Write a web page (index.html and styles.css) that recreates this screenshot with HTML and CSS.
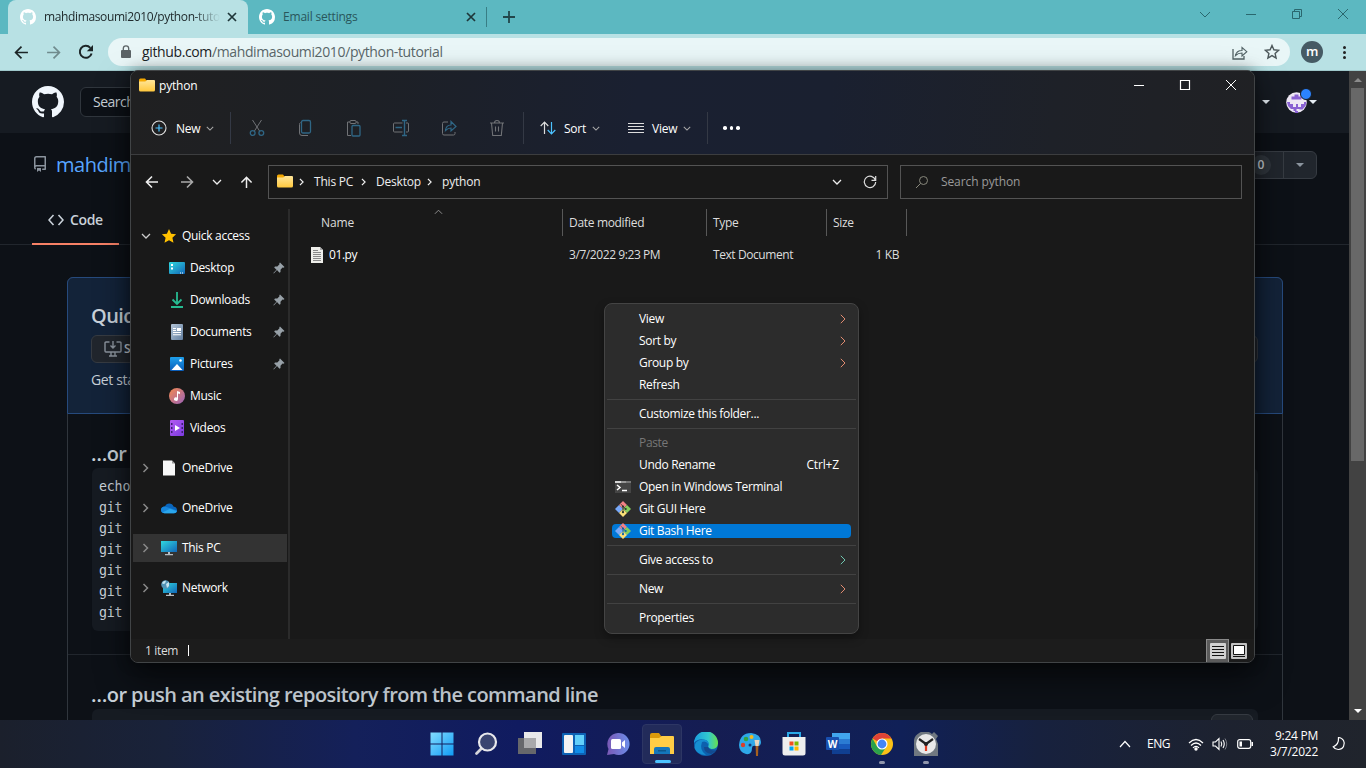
FILE: index.html
```html
<!DOCTYPE html>
<html lang="en">
<head>
<meta charset="utf-8">
<title>Desktop</title>
<link rel="stylesheet" href="styles.css">
</head>
<body>
<svg width="0" height="0" class="defs">
  <defs>
    <symbol id="octocat" viewBox="0 0 16 16"><path fill-rule="evenodd" d="M8 0C3.58 0 0 3.58 0 8c0 3.54 2.29 6.53 5.47 7.59.4.07.55-.17.55-.38 0-.19-.01-.82-.01-1.49-2.01.37-2.53-.49-2.69-.94-.09-.23-.48-.94-.82-1.13-.28-.15-.68-.52-.01-.53.63-.01 1.08.58 1.23.82.72 1.21 1.87.87 2.33.66.07-.52.28-.87.51-1.07-1.78-.2-3.64-.89-3.64-3.95 0-.87.31-1.59.82-2.15-.08-.2-.36-1.02.08-2.12 0 0 .67-.21 2.2.82.64-.18 1.32-.27 2-.27s1.36.09 2 .27c1.53-1.04 2.2-.82 2.2-.82.44 1.1.16 1.92.08 2.12.51.56.82 1.27.82 2.15 0 3.07-1.87 3.75-3.65 3.95.29.25.54.73.54 1.48 0 1.07-.01 1.93-.01 2.2 0 .21.15.46.55.38A8.01 8.01 0 0 0 16 8c0-4.42-3.58-8-8-8z"/></symbol>
    <symbol id="x" viewBox="0 0 10 10"><path d="M1 1l8 8M9 1l-8 8" fill="none" stroke="currentColor" stroke-width="1.7"/></symbol>
    <symbol id="thinx" viewBox="0 0 12 12"><path d="M1 1l10 10M11 1L1 11" fill="none" stroke="currentColor"/></symbol>
    <symbol id="down" viewBox="0 0 10 6"><path d="M1 1l4 4 4-4" fill="none" stroke="currentColor" stroke-width="1.3"/></symbol>
    <symbol id="right" viewBox="0 0 6 10"><path d="M1 1l4 4-4 4" fill="none" stroke="currentColor" stroke-width="1.5"/></symbol>
    <symbol id="thinright" viewBox="0 0 6 10"><path d="M.8.8L5 5 .8 9.200" fill="none" stroke="currentColor"/></symbol>
    <symbol id="arrow" viewBox="0 0 14 14"><path d="M13 7H1.5M7 1.5L1.5 7 7 12.500" fill="none" stroke="currentColor" stroke-width="1.6"/></symbol>
    <symbol id="folder" viewBox="0 0 16 14"><path d="M0 2Q0 .5 1.500.5H6L7.500 2.500H14V7H0z" fill="#f5a800"/><path d="M0 3.500H6.300L8 2H15Q16 2 16 3V12Q16 13.500 14.500 13.500H1.500Q0 13.500 0 12z" fill="url(#gf)"/></symbol>
    <symbol id="pin" viewBox="0 0 12 12"><path d="M7 .5L11.500 5 10.500 5.700 9.500 5.500 7.500 7.800V10L6.500 10.700 4 8 .8 11.500.4 11 3.500 7.700 1.200 5.400 2 4.400H4.300L6.500 2.300 6.300 1.300z" fill="#98a1a8"/></symbol>
    <symbol id="git" viewBox="0 0 16 16"><path d="M8 0l4 4-4 4-4-4z" fill="#f28186"/><path d="M4 4l4 4-4 4-4-4z" fill="#78a9fa"/><path d="M12 4l4 4-4 4-4-4z" fill="#85cd5c"/><path d="M8 8l4 4-4 4-4-4z" fill="#fbe078"/><path d="M6 3.200L10.500 8M8 5.500V11" fill="none" stroke="currentColor" stroke-width=".9"/><g fill="currentColor"><circle cx="8" cy="5.500" r="1.100"/><circle cx="10.700" cy="8" r="1.100"/><circle cx="8" cy="11.200" r="1.100"/></g></symbol>
    <symbol id="monitor" viewBox="0 0 16 15"><path d="M0 .5h16v11H0z" fill="url(#gm)"/><path d="M7 11.500h2V14H7zM4 13.500h8v1.200H4z" fill="#b5bcc2"/></symbol>
    <linearGradient id="gf" x2="0" y2="1"><stop stop-color="#ffe69a"/><stop offset="1" stop-color="#ffc83d"/></linearGradient>
    <linearGradient id="gm" x2="1" y2="1"><stop stop-color="#30d8de"/><stop offset="1" stop-color="#1266b8"/></linearGradient>
    <linearGradient id="gw" x2="1" y2="1"><stop stop-color="#83dcff"/><stop offset="1" stop-color="#109cf5"/></linearGradient>
    <linearGradient id="gmu" x2="1" y2="1"><stop stop-color="#f58a4e"/><stop offset="1" stop-color="#9a62ba"/></linearGradient>
    <linearGradient id="gv" x2="1" y2="1"><stop stop-color="#b45af2"/><stop offset="1" stop-color="#7b3be0"/></linearGradient>
    <linearGradient id="gp" x2="0" y2="1"><stop stop-color="#1ea0ec"/><stop offset="1" stop-color="#0a5cb8"/></linearGradient>
    <linearGradient id="gdoc" x2="1" y2="1"><stop stop-color="#b4c5d8"/><stop offset="1" stop-color="#637f9f"/></linearGradient>
    <linearGradient id="gc" x2="1" y2="0"><stop stop-color="#7a58b5"/><stop offset="1" stop-color="#6c8eea"/></linearGradient>
    <linearGradient id="ge" x2="1" y2="0"><stop stop-color="#199ce0"/><stop offset=".6" stop-color="#32c8ce"/><stop offset="1" stop-color="#68e04d"/></linearGradient>
  </defs>
</svg>
<div class="desktop">
  <div class="browser">
    <div class="tabs">
      <div class="tab active"><svg class="i16 white"><use href="#octocat"/></svg><span class="tabname fade">mahdimasoumi2010/python-tuto</span><svg class="close"><use href="#x"/></svg></div>
      <div class="tab"><svg class="i16 white"><use href="#octocat"/></svg><span class="tabname">Email settings</span><svg class="close"><use href="#x"/></svg></div>
      <i class="tabsep"></i>
      <svg class="plus" viewBox="0 0 12 12"><path d="M6 0v12M0 6h12" stroke="currentColor" stroke-width="1.800"/></svg>
      <div class="winbtns">
        <svg width="12" height="7" viewBox="0 0 12 7"><path d="M1 1l5 5 5-5" fill="none" stroke="currentColor"/></svg>
        <svg width="12" height="12" viewBox="0 0 12 12"><path d="M1 6.500h10" stroke="currentColor"/></svg>
        <svg width="12" height="12" viewBox="0 0 12 12"><path d="M1.500 3.500h7v7h-7zM3.500 3.500v-2h7v7h-2" fill="none" stroke="currentColor"/></svg>
        <svg width="12" height="12"><use href="#thinx"/></svg>
      </div>
    </div>
    <div class="toolbar">
      <svg class="nav" viewBox="0 0 14 14"><use href="#arrow"/></svg>
      <svg class="nav flip dim" viewBox="0 0 14 14"><use href="#arrow"/></svg>
      <svg class="reload" viewBox="0 0 16 16"><path d="M13.600 9.500A6 6 0 1 1 12.300 3.800" fill="none" stroke="currentColor" stroke-width="2"/><path d="M15 1v6.200H8.800z" fill="currentColor"/></svg>
      <div class="omnibox">
        <svg width="10" height="14" viewBox="0 0 10 14"><path d="M1 5h8q1 0 1 1v6q0 1-1 1H1q-1 0-1-1V6q0-1 1-1z" fill="#5b6366"/><path d="M2.300 6V3.500a2.700 2.700 0 0 1 5.400 0V6" fill="none" stroke="#5b6366" stroke-width="1.300"/></svg>
        <span class="url"><b>github.com</b>/mahdimasoumi2010/python-tutorial</span>
        <svg class="share" width="16" height="15" viewBox="0 0 16 15"><path d="M1 4v10h11v-3" fill="none" stroke="#536366" stroke-width="1.300"/><path d="M3.500 10.500Q4.500 5.500 10 5.500V2.500L14.800 6.700 10 11V8Q6 8 3.500 10.500z" fill="none" stroke="#536366" stroke-width="1.100"/></svg>
        <svg class="star" width="16" height="16" viewBox="0 0 16 16"><path d="M8 1.500l1.900 4.300 4.700.5-3.500 3.100 1 4.600L8 11.600 3.900 14l1-4.600L1.400 6.300l4.700-.5z" fill="none" stroke="#4d585b" stroke-width="1.400"/></svg>
      </div>
      <span class="me">m</span>
      <span class="dots3"><i></i><i></i><i></i></span>
    </div>
    <div class="viewport">
      <div class="github">
        <header>
          <svg class="ghlogo"><use href="#octocat"/></svg>
          <div class="ghsearch">Search</div>
          <div class="ghuser">
            <i class="tri"></i>
            <span class="avatar"><svg width="21" height="21" viewBox="0 0 21 21"><circle cx="10.500" cy="10.500" r="10.300" fill="#eee8f5"/><path d="M5.500 4.500h3v-2h4v2h3v3h-10zM1 10h3v2h3v3h3v-3h2v3h3v-3h3v-2h2.500l-1 4-3 3.500h-3V17h-3v2h-3v-2H5l-3-3zM9 19h3v2H9z" fill="#8a62d3"/></svg><em></em></span>
            <i class="tri"></i>
          </div>
        </header>
        <div class="repo">
          <svg class="repoicon" viewBox="0 0 16 16"><path fill="#8b949e" fill-rule="evenodd" d="M2 2.500A2.500 2.500 0 0 1 4.500 0h8.750a.75.75 0 0 1 .75.75v12.500a.75.75 0 0 1-.75.75h-2.500a.75.75 0 1 1 0-1.500h1.750v-2h-8a1 1 0 0 0-.714 1.700.75.75 0 0 1-1.072 1.050A2.500 2.500 0 0 1 2 11.500v-9zm10.500-1V9h-8c-.356 0-.694.074-1 .208V2.500a1 1 0 0 1 1-1h8zM5 12.250v3.250a.25.25 0 0 0 .4.200l1.450-1.087a.25.25 0 0 1 .3 0L8.600 15.700a.25.25 0 0 0 .4-.2v-3.250a.25.25 0 0 0-.25-.25h-3.500a.25.25 0 0 0-.25.250z"/></svg>
          <span class="owner">mahdima</span>
          <div class="fork"><span>0</span><b><i class="tri"></i></b></div>
        </div>
        <nav class="ghtabs"><div class="codetab"><svg width="16" height="12" viewBox="0 0 16 12"><path d="M5.500 1L1 6l4.500 5M10.500 1L15 6l-4.500 5" fill="none" stroke="#c9d1d9" stroke-width="1.600"/></svg>Code</div></nav>
        <div class="box">
          <section class="setup">
            <h3>Quick</h3>
            <div class="desk"><svg width="18" height="16" viewBox="0 0 18 16"><path d="M5.500 1H2Q1 1 1 2v8q0 1 1 1h14q1 0 1-1V2q0-1-1-1h-3.500M9 0v6.500M6.500 4.500L9 7l2.500-2.500M7 11v4m4-4v4M5 15h8" fill="none" stroke="#8b949e" stroke-width="1.400"/></svg>S</div>
            <p>Get sta</p>
          </section>
          <section class="create">
            <h3>…or</h3>
            <pre>echo
git
git
git
git
git
git</pre>
          </section>
          <section class="push">
            <h3>…or push an existing repository from the command line</h3>
            <div class="pushcode"><i></i></div>
          </section>
        </div>
      </div>
      <div class="scroll"><i class="up"></i><div></div><i class="dn"></i></div>
    </div>
  </div>

  <div class="explorer">
    <div class="chrome">
      <div class="title"><svg class="f16"><use href="#folder"/></svg><span>python</span>
        <div class="exbtns"><svg width="12" height="12" viewBox="0 0 12 12"><path d="M1 6.500h10" stroke="#fff"/></svg><svg width="12" height="12" viewBox="0 0 12 12"><path d="M1.500 1.500h9v9h-9z" fill="none" stroke="#fff" stroke-width="1.200"/></svg><svg width="12" height="12"><use href="#thinx"/></svg></div>
      </div>
      <div class="cmds">
        <div class="cmd new"><svg width="16" height="16" viewBox="0 0 16 16"><circle cx="8" cy="8" r="7" fill="none" stroke="#ddd" stroke-width="1.100"/><path d="M8 4.500v7M4.500 8h7" stroke="#4cc2ff" stroke-width="1.200"/></svg><span>New</span><svg class="cv"><use href="#down"/></svg></div>
        <div class="cmd icons">
          <svg viewBox="0 0 16 18"><path d="M3.500 1l7.200 11.200M12.500 1L5.300 12.200" stroke="#707276" fill="none"/><g fill="none" stroke="#2f6685" stroke-width="1.300"><circle cx="3.700" cy="14" r="2.400"/><circle cx="12.300" cy="14" r="2.400"/></g></svg>
          <svg viewBox="0 0 16 18"><path d="M3.500 3.500Q2.500 4 2.500 5.500V14Q2.500 16.500 5 16.500h6" stroke="#707276" fill="none"/><rect x="4.500" y="1.500" width="9" height="12.500" rx="1.500" stroke="#2f6685" stroke-width="1.300" fill="none"/></svg>
          <svg viewBox="0 0 16 18"><path d="M5 3H2.500v13.500H6M11 3h2v2" stroke="#707276" fill="none"/><rect x="5" y="1.500" width="6" height="3" rx="1" stroke="#707276" fill="none"/><rect x="7" y="6.500" width="8" height="10.500" rx="1" stroke="#2f6685" stroke-width="1.300" fill="none"/></svg>
          <svg viewBox="0 0 16 18"><path d="M9.500 4H1.500Q.5 4 .5 5v7q0 1 1 1h8M13 4h2q.5 0 .5 1v7q0 1-1 1H13" stroke="#707276" fill="none"/><path d="M11.500 1.500v15M9 1.500h5M9 16.500h5M2.500 8.500H9" stroke="#2f6685" stroke-width="1.400"/></svg>
          <svg viewBox="0 0 16 18"><path d="M7 3H3Q1.500 3 1.500 4.500v10Q1.500 16 3 16h9.500q1.500 0 1.500-1.500V13" stroke="#707276" fill="none"/><path d="M4.500 11.500Q5 6 10 6V2.500L15 7.500 10 12V9Q7 9 4.500 11.500z" stroke="#2f6685" stroke-width="1.200" fill="none"/></svg>
          <svg viewBox="0 0 16 18"><path d="M1 4h14M2.500 4l1.200 12.500h8.600L13.500 4M5.500 4Q5.500 1.500 8 1.500t2.500 2.500M6.500 7.500v5M9.500 7.500v5" stroke="#707276" fill="none" stroke-width="1.100"/></svg>
        </div>
        <div class="cmd sort"><svg width="16" height="14" viewBox="0 0 16 14"><path d="M4.500 13V1.500M.7 5l3.800-3.800L8.300 5" stroke="#ddd" fill="none" stroke-width="1.200"/><path d="M11.500 1v11.500M7.700 9l3.800 3.800L15.300 9" stroke="#4cc2ff" fill="none" stroke-width="1.200"/></svg><span>Sort</span><svg class="cv"><use href="#down"/></svg></div>
        <div class="cmd view"><svg width="16" height="12" viewBox="0 0 16 12"><path d="M0 1.500h16M0 4.500h16M0 7.500h16M0 10.500h16" stroke="#ddd"/></svg><span>View</span><svg class="cv"><use href="#down"/></svg></div>
        <div class="more"><i></i><i></i><i></i></div>
      </div>
    </div>
    <div class="navrow">
      <svg class="n1"><use href="#arrow"/></svg>
      <svg class="n2 flip"><use href="#arrow"/></svg>
      <svg class="n3"><use href="#down"/></svg>
      <svg class="n4 rot"><use href="#arrow"/></svg>
      <div class="addr"><svg class="f16"><use href="#folder"/></svg><svg class="bc"><use href="#right"/></svg><span class="c1">This PC</span><svg class="bc"><use href="#right"/></svg><span class="c2">Desktop</span><svg class="bc"><use href="#right"/></svg><span class="c3">python</span>
        <svg class="adown"><use href="#down"/></svg><svg width="14" height="14" viewBox="0 0 14 14"><path d="M12.400 5A5.700 5.700 0 1 0 12.700 7M12.700 1v4.300H8.500" fill="none" stroke="#ddd" stroke-width="1.200"/></svg></div>
      <div class="find"><svg width="14" height="14" viewBox="0 0 14 14"><circle cx="8.500" cy="5.500" r="4" fill="none" stroke="#88887c"/><path d="M5.500 8.500L1 13" stroke="#88887c"/></svg><span>Search python</span></div>
    </div>
    <div class="main">
      <aside>
        <div class="row top"><svg class="tg dwn"><use href="#down"/></svg><svg class="i16" viewBox="0 0 16 16"><path d="M8 1l2.100 4.700 5 .5-3.700 3.500 1.100 5L8 12.200 3.500 14.700l1.100-5L.9 6.200l5-.5z" fill="#ffc000"/></svg><span>Quick access</span></div>
        <div class="row sub"><svg class="i16" viewBox="0 0 16 16"><rect y="2" width="16" height="12" rx="1" fill="url(#gm)"/><path d="M2 4h2v2H2zM2 7.500h2v2H2zM11 12.500h1v1h-1zM13 12.500h1v1h-1z" fill="#fff"/></svg><span>Desktop</span><svg class="pin"><use href="#pin"/></svg></div>
        <div class="row sub"><svg class="i16" viewBox="0 0 16 16"><path d="M8 0v12M3.500 7.500L8 12l4.500-4.500M2 15h12" fill="none" stroke="#26bb91" stroke-width="1.800"/></svg><span>Downloads</span><svg class="pin"><use href="#pin"/></svg></div>
        <div class="row sub"><svg class="i16" viewBox="0 0 16 16"><rect x="2" width="12" height="16" rx="1" fill="url(#gdoc)"/><path d="M4 4h3v1H4zM4 6h3v1H4zM8 4h4v3H8zM4 8h8v1H4zM4 10.200h8v1H4z" fill="#fff"/></svg><span>Documents</span><svg class="pin"><use href="#pin"/></svg></div>
        <div class="row sub"><svg class="i16" viewBox="0 0 16 16"><rect x="1" y="1" width="14" height="14" rx="1" fill="url(#gp)"/><path d="M2.500 14L8 8l5.500 6z" fill="#fff"/><circle cx="11.500" cy="4.500" r="1.300" fill="#fff"/></svg><span>Pictures</span><svg class="pin"><use href="#pin"/></svg></div>
        <div class="row sub"><svg class="i16" viewBox="0 0 16 16"><circle cx="8" cy="8" r="8" fill="url(#gmu)"/><path d="M8 3l3 1v2L9 5.500V11a2 1.800 0 1 1-1-1.500z" fill="#fff"/></svg><span>Music</span></div>
        <div class="row sub"><svg class="i16" viewBox="0 0 16 16"><rect x="1" width="14" height="16" rx="1" fill="url(#gv)"/><path d="M2 3h1.500v2H2zM2 7h1.500v2H2zM2 11h1.500v2H2zM12.500 3H14v2h-1.500zM12.500 7H14v2h-1.500zM12.500 11H14v2h-1.500z" fill="#3d2073"/><path d="M6 5l5 3-5 3z" fill="#fff"/></svg><span>Videos</span></div>
        <div class="row top gap"><svg class="tg"><use href="#right"/></svg><svg class="i16" viewBox="0 0 16 16"><path d="M2 .5h9L14 3.500v12H2z" fill="#f7f7f7"/><path d="M11 .5v3h3z" fill="#999"/></svg><span>OneDrive</span></div>
        <div class="row top gap"><svg class="tg"><use href="#right"/></svg><svg class="i16" viewBox="0 0 16 16"><path d="M4 6.500A4.500 4.500 0 0 1 12.500 6.500Q16 7 16 10.300 16 13 13 13H3.500Q0 13 0 9.700 0 6.800 4 6.500z" fill="#0a66bd"/><path d="M4 6.500L16 10.500Q15.800 13.200 13 13.200H3.500Q0 13 0 9.700 0 6.800 4 6.500z" fill="#1786dc"/><path d="M1.500 12.500L9 8.800l6.700 2.500Q15 13.200 13 13.200H3.500z" fill="#2aa6ec"/></svg><span>OneDrive</span></div>
        <div class="row top gap sel"><svg class="tg"><use href="#right"/></svg><svg class="i16"><use href="#monitor"/></svg><span>This PC</span></div>
        <div class="row top gap"><svg class="tg"><use href="#right"/></svg><svg class="i16" viewBox="0 0 16 16"><path d="M2 3h14v10H2z" fill="url(#gm)"/><path d="M8 13h2v2H8zM5 14.700h8v1.200H5z" fill="#b5bcc2"/><circle cx="4.500" cy="4.500" r="4.300" fill="#5293b5"/><path d="M1 3Q3 0 5 .8L4 3.500 2 4zM5 4l3-2v4L6 8z" fill="#c5e5f0"/></svg><span>Network</span></div>
      </aside>
      <div class="files">
        <svg class="asc" viewBox="0 0 10 6"><path d="M1 5l4-4 4 4" fill="none" stroke="#999"/></svg>
        <div class="cols"><span>Name</span><span>Date modified</span><span>Type</span><span>Size</span></div>
        <div class="file"><span class="fn"><svg width="12" height="16" viewBox="0 0 12 16"><path d="M0 0h9l3 3v13H0z" fill="#eeeeea"/><path d="M9 0v3h3z" fill="#aaa"/><path d="M2 3.500h5M2 5.500h8M2 7.500h8M2 9.500h8M2 11.500h8M2 13.500h8" stroke="#888"/></svg>01.py</span><span>3/7/2022 9:23 PM</span><span>Text Document</span><span class="sz">1 KB</span></div>
      </div>
    </div>
    <div class="status"><span>1 item</span><i></i>
      <div class="modes"><b><svg width="16" height="16" viewBox="0 0 16 16"><rect width="16" height="16" rx="1" fill="#d0d0d0"/><path d="M2 3.500h12M2 6.500h12M2 9.500h12M2 12.500h12" stroke="#111"/></svg></b><svg width="16" height="16" viewBox="0 0 16 16"><rect width="16" height="16" rx="1" fill="#c2c2c2"/><path d="M2.500 2.500h11v9h-11z" fill="#fff" stroke="#111"/><path d="M2 13.500h12" stroke="#111"/></svg></div>
    </div>
  </div>

  <div class="menu">
    <div class="mi"><span>View</span><svg class="ma"><use href="#thinright"/></svg></div>
    <div class="mi"><span>Sort by</span><svg class="ma"><use href="#thinright"/></svg></div>
    <div class="mi"><span>Group by</span><svg class="ma"><use href="#thinright"/></svg></div>
    <div class="mi"><span>Refresh</span></div>
    <hr>
    <div class="mi"><span>Customize this folder...</span></div>
    <hr>
    <div class="mi off"><span>Paste</span></div>
    <div class="mi"><span>Undo Rename</span><kbd>Ctrl+Z</kbd></div>
    <div class="mi ic"><svg class="i16" viewBox="0 0 16 16"><path d="M0 2h16v12H0z" fill="#454545"/><path d="M0 2h6v2H0z" fill="#d5d5d5"/><path d="M6 2h5v2H6z" fill="#999"/><path d="M11 2h5v2h-5z" fill="#777"/><path d="M2 6l3 2.500L2 11M7 11.500h5" fill="none" stroke="#fff" stroke-width="1.500"/></svg><span>Open in Windows Terminal</span></div>
    <div class="mi ic"><svg class="i16 gitdark"><use href="#git"/></svg><span>Git GUI Here</span></div>
    <div class="mi ic hot"><svg class="i16 gitblue"><use href="#git"/></svg><span>Git Bash Here</span></div>
    <hr>
    <div class="mi"><span>Give access to</span><svg class="ma teal"><use href="#thinright"/></svg></div>
    <hr>
    <div class="mi"><span>New</span><svg class="ma"><use href="#thinright"/></svg></div>
    <hr>
    <div class="mi"><span>Properties</span></div>
  </div>

  <div class="taskbar">
    <div class="apps">
      <div><svg viewBox="0 0 24 24"><path d="M.5.5h11v11H.5zM12.500.5h11v11h-11zM.5 12.500h11v11H.5zM12.500 12.500h11v11h-11z" fill="url(#gw)"/></svg></div>
      <div><svg viewBox="0 0 24 24"><path d="M2.500 21.500L8 16" stroke="#d5d5d9" stroke-width="2.800" stroke-linecap="round"/><circle cx="13.500" cy="10" r="8.500" fill="#3a4470" stroke="#e8e8ec" stroke-width="2.200"/></svg></div>
      <div><svg viewBox="0 0 24 24"><path d="M6 0h18v16H6z" fill="#e9e9ea"/><path d="M0 6h18v16H0z" fill="#66676b"/><path d="M6 6h12v10H6z" fill="#a9a9ab"/></svg></div>
      <div><svg viewBox="0 0 24 24"><rect y="1" width="24" height="22" rx="1" fill="#0d62b5"/><rect x="2" y="3" width="9" height="18" rx="1" fill="#f3f3f3"/><path d="M13 3h9v10h-9z" fill="#62d0fb"/><path d="M13 14h9v7h-9z" fill="#118de8"/></svg></div>
      <div><svg viewBox="0 0 24 24"><path d="M12 1A11 11 0 1 1 8 22L1 23 2.500 17A11 11 0 0 1 12 1z" fill="url(#gc)"/><rect x="5" y="7" width="10" height="10" rx="1.500" fill="#fff"/><path d="M16 10.500L19 8v8l-3-2.500z" fill="#fff"/></svg></div>
      <div class="open"><svg viewBox="0 0 24 24"><path d="M0 3Q0 1 2 1h7l2 3h11v8H0z" fill="#dc9a0b"/><path d="M0 6h9l3-2h11q1 0 1 1v17H0z" fill="#ffcd45"/><path d="M4 22v-5q0-2 2-2h12q2 0 2 2v5z" fill="#1476bb"/><path d="M8 18h8v1.500H8z" fill="#0d578c"/></svg><i></i></div>
      <div><svg viewBox="0 0 24 24"><circle cx="12" cy="12" r="12" fill="#0d61ae"/><path d="M0 11A12 12 0 0 1 24 11.500Q23.500 17 17.500 17q-4-.5-3-3.500 1-5-5-6Q3.500 6.500 0 11z" fill="url(#ge)"/><path d="M8 10q-3 8 4 13Q3 23 .5 16 0 8 9 7.500q6 .5 5.500 5Q12 8.500 8 10z" fill="#168fd2"/><path d="M14 15q3 5 8.500 3-2 2.500-5 4Q10 21 10 15z" fill="#134a8f"/></svg></div>
      <div><svg viewBox="0 0 24 24"><path d="M13 1Q23 2 23 10 23 15 18 14q-4-1-4 2 0 7-6 6Q1 20 1 13 2 1 13 1z" fill="#2ea8e8"/><circle cx="5" cy="13" r="2.200" fill="#d9402c"/><circle cx="8" cy="7" r="2.300" fill="#31a545"/><circle cx="13.500" cy="5" r="2" fill="#f5b91d"/><circle cx="12" cy="13" r="1.500" fill="#153a78"/><path d="M17.500 12h3L20 24h-2z" fill="#a7601d"/><path d="M16.500 8h5l-1 6h-3z" fill="#e7d5bf"/></svg></div>
      <div><svg viewBox="0 0 24 24"><path d="M6 7V1h12v6" stroke="#2aa9e8" stroke-width="2" fill="none"/><path d="M.5 5h23v16q0 2.500-2.500 2.500H3Q.5 23.500.5 21z" fill="#eee"/><path d="M7.500 9.500h4v4h-4z" fill="#f25022"/><path d="M12.500 9.500h4v4h-4z" fill="#7fba00"/><path d="M7.500 14.500h4v4h-4z" fill="#00a4ef"/><path d="M12.500 14.500h4v4h-4z" fill="#ffb900"/></svg></div>
      <div><svg viewBox="0 0 24 24"><path d="M6 1h18v6H6z" fill="#41a5ee"/><path d="M6 7h18v5H6z" fill="#2b7cd3"/><path d="M6 12h18v5H6z" fill="#185abd"/><path d="M6 17h18v5H6z" fill="#103f91"/><rect y="5" width="13" height="13" rx="1" fill="#1850b0"/><text x="6.500" y="15.500" text-anchor="middle" class="w">W</text></svg></div>
      <div><svg viewBox="0 0 24 24"><circle cx="12" cy="12" r="11" fill="#fbc116"/><path d="M12 12L2.500 6.500A11 11 0 0 1 21.500 6.500H12z" fill="#df4337"/><path d="M2.500 6.500A11 11 0 0 0 11 23l5.500-8.500L7 14.500z" fill="#2ba24c"/><circle cx="12" cy="12" r="5.500" fill="#fff"/><circle cx="12" cy="12" r="4.400" fill="#4285f4"/></svg><i class="dot"></i></div>
      <div><svg viewBox="0 0 24 24"><path d="M0 12A11 11 0 0 1 18 2l2-2 4 4-2 3 2 5v12H0z" fill="#707880"/><circle cx="12" cy="12" r="10" fill="#e9e9e9"/><path d="M12 12L5 7M12 12l7-5" stroke="#222" stroke-width="2.200"/><path d="M12 12v7" stroke="#e03b20" stroke-width="2.200"/><circle cx="12" cy="12" r="2" fill="#222"/></svg><i class="dot"></i></div>
    </div>
    <div class="tray">
      <svg width="12" height="8" viewBox="0 0 12 8"><path d="M1 7l5-5.500L11 7" stroke="#fff" fill="none" stroke-width="1.200"/></svg>
      <span class="eng">ENG</span>
      <svg class="wifi" width="16" height="13" viewBox="0 0 16 13"><path d="M1 5q7-7 14 0M3 7.500q5-5 10 0M5 9.800q3-3 6 0" fill="none" stroke="#fff" stroke-width="1.200"/><circle cx="8" cy="11" r="1.700" fill="#fff"/></svg>
      <svg class="vol" width="16" height="14" viewBox="0 0 16 14"><path d="M1 5h2.500L7 1.500v11L3.500 9H1zM9 4.500q1.500 2.500 0 5M11 3q2.500 4 0 8" fill="none" stroke="#fff" stroke-width="1.100"/><path d="M13 1.500q3.500 5.500 0 11" fill="none" stroke="#7b7e87"/></svg>
      <svg class="bat" width="16" height="10" viewBox="0 0 16 10"><rect x=".7" y=".7" width="13" height="8.600" rx="2" fill="none" stroke="#fff" stroke-width="1.200"/><path d="M2.500 2.500h2.500v5H2.500zM14.500 3H16v4h-1.500z" fill="#fff"/></svg>
      <div class="clock"><span>9:24 PM</span><span>3/7/2022</span></div>
      <svg class="moon" width="14" height="16" viewBox="0 0 14 16"><path d="M6.500 1.500Q7 8.500 1.300 10.800A6 6 0 1 0 6.500 1.500z" fill="none" stroke="#fff" stroke-width="1.200"/></svg>
    </div>
  </div>
</div>
</body>
</html>
```
FILE: styles.css
```css
* { box-sizing: border-box; }
body { margin: 0; background: #000; font: 12px/16px "Open Sans", "Noto Sans", sans-serif; letter-spacing: -.33px; color: #fff; }
svg { display: block; flex: none; }
.defs { position: absolute; }
span { white-space: nowrap; }
.desktop { position: relative; width: 1366px; height: 768px; overflow: hidden; }
.i16 { width: 16px; height: 16px; }
.f16 { width: 16px; height: 14px; }
.white { fill: #fff; }
.flip { transform: rotate(180deg); }
.rot { transform: rotate(90deg); }
.tri { width: 0; height: 0; border: 4px solid transparent; border-top-color: currentColor; border-bottom: 0; }

/* browser */
.browser { height: 720px; display: flex; flex-direction: column; }
.tabs { height: 34px; background: #5cb8c1; display: flex; align-items: center; padding-left: 8px; color: #1e3639; }
.tab { width: 240px; height: 34px; display: flex; align-items: center; padding: 0 11px 0 12px; }
.tab + .tab { width: 238px; padding: 0 10px 0 11px; }
.tab.active { background: #b8e1e4; border-radius: 8px 8px 0 0; color: #202b2d; }
.tab:not(.active) { color: #29565b; }
.tabname { flex: 1; margin-left: 8px; letter-spacing: -.2px; }
.fade { letter-spacing: -.37px; -webkit-mask-image: linear-gradient(90deg, #000 85%, transparent); mask-image: linear-gradient(90deg, #000 85%, transparent); }
.close { width: 10px; height: 10px; margin-left: 7px; color: #1e3639; }
.tabsep { width: 1px; height: 20px; background: #387e85; }
.plus { width: 12px; height: 12px; margin-left: 16px; color: #22464a; }
.winbtns { margin: -6px 17px 0 auto; display: flex; gap: 34px; align-items: center; color: #2a676e; }
.toolbar { height: 37px; background: #b8e1e4; display: flex; align-items: center; border-bottom: 1px solid #9fc8cb; color: #1b2426; }
.nav { width: 15px; height: 15px; margin-left: 14px; }
.dim { opacity: .45; }
.nav.dim { margin-left: 17px; }
.reload { width: 16px; height: 16px; margin-left: 17px; }
.omnibox { width: 1182px; height: 28px; margin-left: 14px; background: #e9f6f7; border-radius: 14px; display: flex; align-items: center; padding: 0 10px 0 13px; }
.url { margin-left: 11px; font-size: 14px; color: #5a676a; letter-spacing: -.37px; }
.url b { font-weight: 400; color: #1b2426; }
.share { margin-left: auto; }
.star { margin-left: 16px; }
.me { width: 22px; height: 22px; border-radius: 50%; background: #455a64; text-align: center; line-height: 20px; font-size: 13px; font-weight: 600; color: #fff; margin-left: 11px; }
.dots3 { display: flex; flex-direction: column; gap: 2px; margin-left: 20px; }
.dots3 i { width: 3px; height: 3px; border-radius: 50%; background: #222; }
.viewport { flex: 1; display: flex; min-height: 0; }
.scroll { width: 17px; background: #424242; display: flex; flex-direction: column; align-items: center; padding: 7px 0; }
.scroll div { width: 13px; height: 373px; background: #686868; margin: 6px 0 auto; }
.scroll i { border: 4px solid transparent; }
.scroll .up { border-top: 0; border-bottom-color: #8b8b8b; }
.scroll .dn { border-bottom: 0; border-top-color: #fff; }

/* repository page */
.github { width: 1349px; background: #0d1117; overflow: hidden; color: #c9d1d9; letter-spacing: 0; }
.github header { height: 62px; background: #161b22; display: flex; align-items: center; padding: 0 32px; }
.ghlogo { width: 32px; height: 32px; fill: #f0f6fc; }
.ghsearch { width: 272px; height: 30px; margin-left: 16px; border: 1px solid #30363d; border-radius: 6px; background: #0d1117; padding: 5px 12px; font-size: 14px; line-height: 18px; letter-spacing: -.5px; }
.ghuser { margin-left: auto; display: flex; align-items: center; gap: 8px; color: #e6edf3; }
.ghuser .avatar + .tri { margin-left: -6px; }
.avatar { position: relative; }
.ghuser .avatar { margin-left: 8px; }
.ghuser > .tri:first-child { margin-right: 0; }
.avatar em { position: absolute; left: 14px; top: -4px; width: 12px; height: 12px; border: 1px solid #161b22; border-radius: 50%; background: #2b83ff; }
.repo { height: 64px; display: flex; align-items: center; padding: 0 32px; }
.repoicon { width: 16px; height: 16px; margin-bottom: 3px; }
.owner { margin-left: 8px; font-size: 20px; color: #58a6ff; letter-spacing: -.5px; }
.fork { width: 110px; height: 28px; margin-left: auto; background: #21262d; border: 1px solid #363b42; border-radius: 6px; display: flex; align-items: center; justify-content: flex-end; }
.fork span { width: 20px; height: 20px; border-radius: 10px; background: #30363d; text-align: center; line-height: 19px; font-weight: 600; margin-right: 12px; }
.fork b { width: 33px; height: 26px; border-left: 1px solid #363b42; display: flex; align-items: center; justify-content: center; color: #8b949e; }
.ghtabs { height: 48px; border-bottom: 1px solid #21262d; padding-left: 32px; }
.codetab { width: 87px; height: 48px; border-bottom: 2px solid #f78166; display: flex; align-items: center; gap: 6px; padding-left: 16px; font-size: 14px; font-weight: 600; letter-spacing: -.35px; }
.box { width: 1216px; height: 600px; margin: 32px 0 0 67px; border: 1px solid #30363d; border-radius: 6px; }
.setup { height: 137px; margin: -1px; padding: 24px 24px 24px 23px; background: #132339; border: 1px solid #264a7d; border-radius: 6px 6px 0 0; }
h3 { margin: 0; font-size: 20px; line-height: 28px; font-weight: 600; letter-spacing: -.6px; }
.desk { height: 28px; margin-top: 5px; padding-left: 12px; border: 1px solid #363b42; border-radius: 6px; background: #21262d; display: flex; align-items: center; gap: 2px; font-weight: 600; }
.setup p { margin: 7px 0; font-size: 14px; line-height: 20px; letter-spacing: -.35px; }
.create { height: 242px; padding: 27px 24px 0; border-bottom: 1px solid #21262d; }
.create h3, .push h3 { margin-left: -1px; }
pre { height: 163px; margin: 0; padding: 8px 7px; background: #161b22; border-radius: 6px; font: 13.3px/21px "DejaVu Sans Mono", monospace; letter-spacing: -.2px; }
.push { padding: 26px 24px 0; }
.push h3 { letter-spacing: -.57px; }
.pushcode { height: 60px; background: #161b22; border-radius: 6px; display: flex; justify-content: flex-end; padding: 5px 5px; }
.pushcode i { width: 42px; height: 28px; border: 1px solid #363b42; border-radius: 6px; background: #21262d; }

/* file explorer */
.explorer { position: absolute; left: 130px; top: 70px; width: 1125px; height: 593px; border: 1px solid #414446; border-radius: 8px; background: #191919; overflow: hidden; box-shadow: 0 14px 32px rgba(0,0,0,.55), 0 0 14px rgba(0,0,0,.35); display: flex; flex-direction: column; }
.chrome { height: 84px; border-bottom: 1px solid #3c3d3f; background: linear-gradient(96deg, #202021 0, #1d2026 22%, #1a2031 45%, #1a2030 62%, #1e2128 82%, #202124 100%); }
.title { height: 30px; display: flex; align-items: center; padding-left: 8px; }
.title svg.f16 { margin-top: -2px; }
.title span { margin-left: 4px; letter-spacing: -.2px; }
.exbtns { display: flex; gap: 34px; margin: -3px 17px 0 auto; }
.cmds { height: 54px; display: flex; align-items: center; }
.cmd { height: 32px; display: flex; align-items: center; border-right: 1px solid #343945; }
.cmd span { margin: 1px 0 0 9px; font-weight: 500; letter-spacing: -.25px; }
.cv { width: 8px; height: 5px; margin-left: auto; color: #aaa; }
.new { width: 100px; padding: 0 16px 0 20px; }
.icons { width: 293px; padding-left: 18px; gap: 32px; }
.icons svg { width: 16px; height: 18px; }
.sort { width: 86px; padding: 0 10px 0 16px; border: 0; }
.sort span { margin-left: 8px; }
.view { width: 98px; padding: 0 16px 0 18px; }
.view span { margin-left: 8px; }
.more { display: flex; gap: 3px; margin-left: 15px; }
.more i { width: 3.500px; height: 3.500px; border-radius: 50%; background: #fff; }
.navrow { height: 54px; display: flex; align-items: center; padding-left: 14px; color: #eee; }
.n1, .n2 { width: 14px; height: 14px; }
.n2 { margin-left: 21px; color: #aaa; }
.n3 { width: 10px; height: 6px; margin-left: 18px; }
.n4 { width: 13px; height: 13px; margin-left: 18px; }
.addr { width: 620px; height: 34px; margin-left: 15px; border: 1px solid #535353; display: flex; align-items: center; padding: 0 10px 0 8px; }
.bc { width: 5px; height: 8px; margin: 0 10px 0 8px; }
.addr .f16 { margin-top: -2px; }
.addr .f16 + .bc { margin-left: 6px; }
.addr span { letter-spacing: -.2px; }
.c1 { width: 39px; }
.c2 { width: 43px; }
.adown { width: 10px; height: 6px; margin: 0 21px 0 auto; }
.find { width: 342px; height: 34px; margin-left: 12px; border: 1px solid #535353; display: flex; align-items: center; padding-left: 14px; color: #9a9a9a; }
.find span { margin-left: 12px; letter-spacing: -.3px; }
.find span { letter-spacing: -.1px; }
.main { height: 430px; display: flex; }
aside { width: 159px; border-right: 2px solid #2b2b2b; padding: 13px 1px 0 2px; }
.row { height: 28px; margin-bottom: 4px; display: flex; align-items: center; padding-left: 36px; }
.row span { margin-left: 5px; letter-spacing: -.3px; }
.row.top { padding-left: 8px; }
.tg { width: 9px; height: 10px; margin-right: 11px; color: #8a8a8a; }
.dwn { height: 6px; width: 10px; margin-right: 10px; color: #ccc; }
.pin { width: 12px; height: 12px; margin-left: auto; margin-right: 2px; }
.gap { margin-top: 12px; }
.sel { background: #333; }
.files { position: relative; flex: 1; padding-left: 17px; }
.asc { position: absolute; left: 144px; top: 0; width: 9px; height: 6px; }
.cols, .file { display: grid; grid-template-columns: 256px 144px 120px 80px; align-items: center; height: 27px; color: #ddd; }
.cols span { height: 27px; line-height: 27px; padding-left: 6px; border-right: 1px solid #585858; }
.cols span:first-child { padding-left: 14px; letter-spacing: -.1px; }
.cols { letter-spacing: -.32px; }
.file { margin-top: 5px; letter-spacing: -.42px; }
.file span { padding-left: 6px; }
.file .fn { display: flex; align-items: center; gap: 6px; padding-left: 4px; color: #fff; }
.file .sz { text-align: right; padding-right: 8px; }
.status { height: 23px; background: #1c1c1c; display: flex; align-items: center; padding-left: 14px; color: #ddd; }
.status > i { width: 1px; height: 11px; margin-left: 10px; background: #fff; }
.modes { margin: 0 7px 0 auto; display: flex; align-items: center; gap: 2px; }
.modes b { padding: 3px 2px 3px 3px; border: 1px solid #8a8a8a; background: #5b5b5b; }

/* context menu */
.menu { position: absolute; left: 604px; top: 303px; width: 255px; height: 331px; padding: 4px 2px; border: 1px solid #444; border-radius: 8px; background: #2c2c2c; box-shadow: 0 4px 10px rgba(0,0,0,.35); display: flex; flex-direction: column; }
.mi { flex: none; height: 22px; display: flex; align-items: center; padding: 0 17px 0 32px; }
.ic { padding-left: 8px; }
.ic span { margin-left: 8px; }
.off { color: #777; }
.ma { width: 6px; height: 10px; margin: 0 -7px 0 auto; color: #e08b70; }
.teal { color: #70c7b0; }
.gitdark { color: #2c3a2c; }
.gitblue { color: #0a62ae; }
kbd { font: inherit; margin-left: auto; letter-spacing: -.15px; }
.hot { background: #0078d7; height: 14px; margin: 4px 5px; padding-left: 3px; border-radius: 4px; }
.menu hr { flex: none; width: 100%; height: 1px; margin: 3px 0; border: 0; background: #424242; }

/* taskbar */
.taskbar { height: 48px; background: linear-gradient(90deg, #1b202c 0, #19223a 12%, #14205a 26%, #101b60 38%, #151d52 52%, #102057 66%, #17213e 76%, #1d222f 90%, #20242c 100%); display: flex; }
.apps { display: flex; gap: 4px; margin-left: 422px; align-items: center; }
.apps div { position: relative; width: 40px; height: 40px; border-radius: 4px; display: flex; align-items: center; justify-content: center; }
.apps svg { width: 24px; height: 24px; }
.apps .open { background: #222b5a; border: 1px solid #2d3664; }
.apps i { position: absolute; left: 12px; bottom: 0; width: 16px; height: 3px; border-radius: 2px; background: #4cc2ff; }
.apps .dot { left: 17px; width: 6px; background: #9096ac; }
.w { font: 700 10px "Open Sans", sans-serif; fill: #fff; }
.tray { margin-left: auto; display: flex; align-items: center; padding-right: 20px; }
.eng { margin-left: 16px; letter-spacing: -.45px; }
.wifi { margin-left: 18px; }
.vol { margin-left: 8px; }
.bat { margin-left: 9px; }
.clock { display: flex; flex-direction: column; align-items: flex-end; width: 65px; letter-spacing: -.25px; }
.moon { margin-left: 14px; }
```
